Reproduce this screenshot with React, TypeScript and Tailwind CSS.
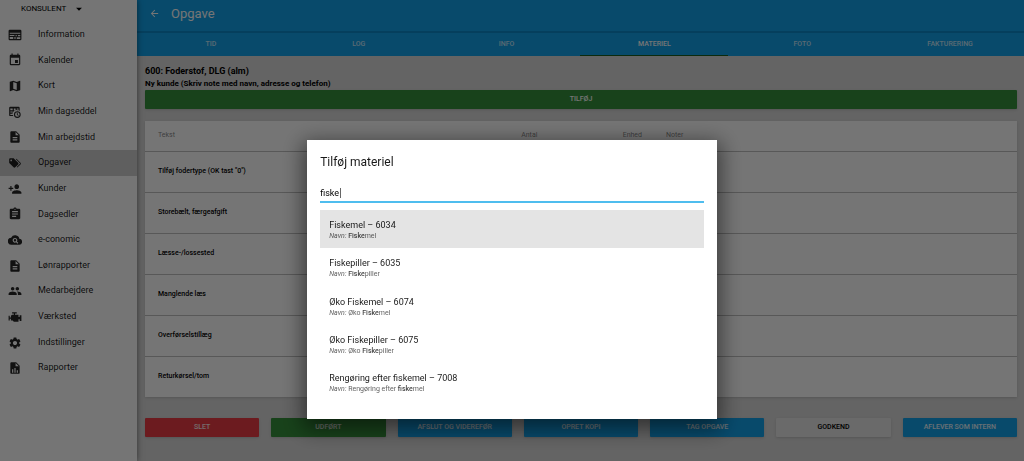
import type { ReactNode } from 'react';
import { clsx } from 'clsx';
import {
  MdArrowBack,
  MdArrowDropDown,
  MdAssignment,
  MdDescription,
  MdEvent,
  MdMap,
  MdPeople,
  MdPersonAdd,
  MdSettings,
} from 'react-icons/md';

function Glyph({ d }: { d: string }) {
  return (
    <svg viewBox="0 0 24 24" className="w-3.5 h-3.5" fill="currentColor" fillRule="evenodd" aria-hidden="true">
      <path d={d} />
    </svg>
  );
}

const newspaperPath =
  'M3 3H21A2 2 0 0 1 23 5V19A2 2 0 0 1 21 21H3A2 2 0 0 1 1 19V5A2 2 0 0 1 3 3ZM3 8V10H21V8ZM3 12V13.5H11V12ZM3 15.5V19H9V15.5ZM13 12V14H15V12ZM17 12V14H21V12ZM11 15.5V19H13V15.5ZM15 16V19H21V16Z';
const tableClockPath =
  'M4 3H18A2 2 0 0 1 20 5V10.2A7 7 0 0 0 9.2 19H4A2 2 0 0 1 2 17V5A2 2 0 0 1 4 3ZM4 6V9H8V6ZM10 6V9H13V6ZM15 6V9H18V6ZM4 11V13H8V11ZM4 15V17H8V15ZM16 10.5A5.8 5.8 0 1 1 16 22.1A5.8 5.8 0 1 1 16 10.5ZM16 12.4A3.9 3.9 0 1 0 16 20.2A3.9 3.9 0 1 0 16 12.4ZM15.2 13.2H16.6V16.2L18.6 17.4L17.9 18.6L15.2 17Z';
const tagsPath =
  'M5.5,9A1.5,1.5 0 0,0 7,7.5A1.5,1.5 0 0,0 5.5,6A1.5,1.5 0 0,0 4,7.5A1.5,1.5 0 0,0 5.5,9M17.41,11.58C17.77,11.94 18,12.44 18,13C18,13.55 17.78,14.05 17.41,14.41L12.41,19.41C12.05,19.77 11.55,20 11,20C10.45,20 9.95,19.78 9.58,19.41L2.59,12.42C2.22,12.05 2,11.55 2,11V6C2,4.89 2.89,4 4,4H9C9.55,4 10.05,4.22 10.41,4.58L17.41,11.58M13.54,5.71L14.54,4.71L21.41,11.58C21.78,11.94 22,12.45 22,13C22,13.55 21.78,14.05 21.42,14.41L16.04,19.79L15.04,18.79L20.75,13L13.54,5.71Z';
const cloudSearchPath =
  'M19.4 10A7.5 7.5 0 0 0 5.4 8A6 6 0 0 0 6 20H19A5 5 0 0 0 19.4 10ZM12 8.5A4 4 0 0 1 15.3 14.6L17.6 16.9L16.2 18.3L13.9 16A4 4 0 1 1 12 8.5ZM12 10.4A2.1 2.1 0 1 0 12 14.6A2.1 2.1 0 1 0 12 10.4Z';
const enginePath =
  'M7,4V6H10V8H7L5,10V13H3V10H1V18H3V15H5V18H8L10,20H18V16H20V19H23V9H20V12H18V8H12V6H15V4H7Z';
const fileChartPath =
  'M13,9H18.5L13,3.5V9M6,2H14L20,8V20A2,2 0 0,1 18,22H6C4.89,22 4,21.1 4,20V4C4,2.89 4.89,2 6,2M7,20H9V14H7V20M11,20H13V12H11V20M15,20H17V16H15V20Z';

const menu: { label: string; icon: ReactNode; active?: boolean }[] = [
  { label: 'Information', icon: <Glyph d={newspaperPath} /> },
  { label: 'Kalender', icon: <MdEvent /> },
  { label: 'Kort', icon: <MdMap /> },
  { label: 'Min dagseddel', icon: <Glyph d={tableClockPath} /> },
  { label: 'Min arbejdstid', icon: <MdDescription /> },
  { label: 'Opgaver', icon: <Glyph d={tagsPath} />, active: true },
  { label: 'Kunder', icon: <MdPersonAdd /> },
  { label: 'Dagsedler', icon: <MdAssignment /> },
  { label: 'e-conomic', icon: <Glyph d={cloudSearchPath} /> },
  { label: 'Lønrapporter', icon: <MdDescription /> },
  { label: 'Medarbejdere', icon: <MdPeople /> },
  { label: 'Værksted', icon: <Glyph d={enginePath} /> },
  { label: 'Indstillinger', icon: <MdSettings /> },
  { label: 'Rapporter', icon: <Glyph d={fileChartPath} /> },
];

const tabs = ['TID', 'LOG', 'INFO', 'MATERIEL', 'FOTO', 'FAKTURERING'];

const rows = [
  'Tilføj fodertype (OK tast "0")',
  'Storebælt, færgeafgift',
  'Læsse-/lossested',
  'Manglende læs',
  'Overførselstillæg',
  'Returkørsel/tom',
];

const actions = [
  { label: 'SLET', color: 'bg-[#ec3c44] text-white/90' },
  { label: 'UDFØRT', color: 'bg-[#35903b] text-white/90' },
  { label: 'AFSLUT OG VIDEREFØR', color: 'bg-[#12a2ea] text-white/90' },
  { label: 'OPRET KOPI', color: 'bg-[#12a2ea] text-white/90' },
  { label: 'TAG OPGAVE', color: 'bg-[#12a2ea] text-white/90' },
  { label: 'GODKEND', color: 'bg-[#e6e6e6] text-black' },
  { label: 'AFLEVER SOM INTERN', color: 'bg-[#12a2ea] text-white/90' },
];

const results = [
  { title: 'Fiskemel – 6034', before: '', match: 'Fiske', after: 'mel' },
  { title: 'Fiskepiller – 6035', before: '', match: 'Fiske', after: 'piller' },
  { title: 'Øko Fiskemel – 6074', before: 'Øko ', match: 'Fiske', after: 'mel' },
  { title: 'Øko Fiskepiller – 6075', before: 'Øko ', match: 'Fiske', after: 'piller' },
  { title: 'Rengøring efter fiskemel – 7008', before: 'Rengøring efter ', match: 'fiske', after: 'mel' },
];

function Sidebar() {
  return (
    <aside className="w-[137px] shrink-0 bg-white shadow-[0_0_6px_rgba(0,0,0,0.5)] z-10">
      <button className="flex items-center h-[17px] pl-[21px] text-[8px] gap-1.5">
        KONSULENT
        <MdArrowDropDown className="w-3.5 h-3.5" />
      </button>
      {/* Menu */}
      <nav className="mt-[5px] h-[359px] flex flex-col">
        {menu.map((item) => (
          <a
            key={item.label}
            href="#"
            className={clsx(
              'flex-1 flex items-center pl-2 gap-4 text-[9px] text-black/90',
              item.active && 'bg-[#d0d0d0]'
            )}
          >
            <span className="w-3.5 text-[14px] text-black/85">{item.icon}</span>
            {item.label}
          </a>
        ))}
      </nav>
    </aside>
  );
}

function MaterialTable() {
  return (
    <table className="mt-3 w-full table-fixed bg-white shadow-sm text-[7px] leading-none">
      <thead>
        <tr className="h-[30px] text-black/50">
          <th className="w-[31%] pl-[13px] text-left font-normal">Tekst</th>
          <th className="w-[14%] text-right font-normal">Antal</th>
          <th className="w-[12%] text-right font-normal">Enhed</th>
          <th className="pl-6 text-left font-normal">Noter</th>
        </tr>
      </thead>
      <tbody>
        {rows.map((row) => (
          <tr key={row} className="h-[41px] border-t border-black/25">
            <td className="pl-[13px] font-medium">{row}</td>
            <td />
            <td />
            <td />
          </tr>
        ))}
      </tbody>
    </table>
  );
}

function MaterialDialog() {
  return (
    <div className="fixed inset-0 z-20 bg-black/54 flex items-start justify-center pt-[140px]">
      <div
        role="dialog"
        aria-labelledby="dialog-title"
        className="w-2/5 bg-white px-[13px] pt-[13px] pb-[17px] shadow-[0_6px_20px_4px_rgba(0,0,0,0.5)]"
      >
        <h2 id="dialog-title" className="text-[12px] leading-[18px] text-black/90">
          Tilføj materiel
        </h2>
        <div className="relative mt-3.5 border-b-2 border-[#4fbdee]">
          <input
            type="text"
            aria-label="Søg materiel"
            defaultValue="fiske"
            className="block w-full h-4 text-[9px] text-black outline-none"
          />
          <span className="absolute left-5 top-[3px] w-px h-2.5 bg-black/60" />
        </div>
        <ul className="mt-[7px] h-48 flex flex-col">
          {results.map((result, i) => (
            <li
              key={result.title}
              className={clsx('flex-1 flex flex-col justify-center px-[9px] pt-px', i === 0 && 'bg-[#e4e4e4]')}
            >
              <span className="text-[9px] leading-3 text-black/90">{result.title}</span>
              <span className="text-[7px] leading-[10px] text-black/65">
                <i>Navn:</i> {result.before}
                <b className="font-medium text-black/75">{result.match}</b>
                {result.after}
              </span>
            </li>
          ))}
        </ul>
      </div>
    </div>
  );
}

export default function App() {
  return (
    <div className="min-h-screen flex bg-[#d9d9d9] font-['Roboto',sans-serif] text-black">
      <Sidebar />
      <div className="flex-1 min-w-0">
        {/* Top bar */}
        <header className="bg-[#12a2ea] text-white">
          <div className="h-[31px] flex items-center pl-3 pb-1 gap-[11px]">
            <button aria-label="Tilbage">
              <MdArrowBack className="w-[11px] h-[11px]" />
            </button>
            <h1 className="text-[13px]">Opgave</h1>
          </div>
          <nav className="flex h-[25px] border-t-2 border-[#0d8acb]">
            {tabs.map((tab) => (
              <a
                key={tab}
                href="#"
                className={clsx(
                  'flex-1 flex items-center justify-center text-[7px] font-medium border-b',
                  tab === 'MATERIEL' ? 'border-[#1b5e20] text-white' : 'border-transparent text-white/75'
                )}
              >
                {tab}
              </a>
            ))}
          </nav>
        </header>

        <main className="pl-2 pr-[7px] pt-2">
          <h2 className="text-[9px] leading-[14px] font-bold">600: Foderstof, DLG (alm)</h2>
          <p className="text-[8px] leading-3 font-bold">Ny kunde (Skriv note med navn, adresse og telefon)</p>
          <button className="block w-full h-[19px] rounded-[1px] bg-[#35903b] text-white text-[7px] font-medium shadow">
            TILFØJ
          </button>
          <MaterialTable />
          <div className="mt-[21px] flex gap-3">
            {actions.map((action) => (
              <button
                key={action.label}
                className={clsx('flex-1 h-[19px] rounded-[1px] text-[7px] font-medium shadow', action.color)}
              >
                {action.label}
              </button>
            ))}
          </div>
        </main>
      </div>
      <MaterialDialog />
    </div>
  );
}
